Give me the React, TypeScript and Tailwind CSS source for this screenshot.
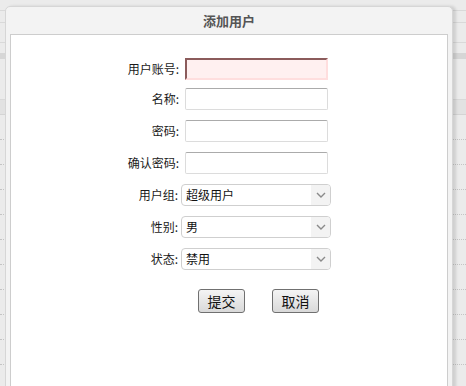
import { useState } from "react";

const font = { fontFamily: '"Noto Sans CJK SC", "Liberation Sans", sans-serif' };

function Chevron() {
	return (
		<svg width="10" height="6" viewBox="0 0 10 6" fill="none">
			<path d="M1 1l4 4 4-4" stroke="#8a8a8a" strokeWidth="1.4" />
		</svg>
	);
}

function Select({ value, options }: { value: string; options: string[] }) {
	const [v, setV] = useState(value);
	return (
		<div className="relative w-[150px] h-[22px]">
			<select value={v} onChange={(e) => setV(e.target.value)} className="appearance-none w-full h-full rounded-[4px] border border-[#cfcfcf] bg-white pl-[4px] text-[12px] text-[#111] outline-none">
				{options.map((o) => (
					<option key={o}>{o}</option>
				))}
			</select>
			<div className="pointer-events-none absolute right-[1px] top-[1px] bottom-[1px] w-[19px] rounded-r-[3px] bg-[#f3f3f3] flex items-center justify-center">
				<Chevron />
			</div>
		</div>
	);
}

export default function App() {
	const [form, setForm] = useState({ account: "", name: "", pwd: "", pwd2: "" });
	const rows = Array.from({ length: 10 });

	return (
		<div className="relative w-[466px] h-[386px] overflow-hidden bg-[#ebebeb]" style={font}>
			{/* underlying page */}
			<div className="flex flex-col">
				<div className="h-[11px] border-b border-[#d9d9d9]" />
				<div className="h-[12px] border-b border-[#d9d9d9]" />
				<div className="h-[20px] border-b border-[#d9d9d9]" />
				<div className="h-[10px]" />
				<div className="h-[6px] bg-[#d6d6d6]" />
				<div className="h-[41px] border-b border-[#d9d9d9]" />
				<div className="h-[15px] bg-[#e2e2e2] border-b border-[#d4d4d4]" />
				{rows.map((_, i) => (
					<div key={i} className="h-[25px] border-b border-dotted border-[#c4c4c4]" />
				))}
			</div>

			{/* dialog */}
			<div className="absolute left-[5px] top-[6px] w-[448px] h-[400px] rounded-t-[5px] border border-[#d6d6d6] bg-[#f3f3f3] shadow-[3px_0_3px_rgba(0,0,0,0.12)] flex flex-col">
				<div className="h-[27px] flex items-center justify-center text-[13px] font-bold text-[#555]">添加用户</div>
				<div className="mx-[4px] flex-1 border border-[#cdcdcd] bg-white pt-[23px]">
					<div className="flex flex-col text-[12px] text-[#1a1a1a]">
						<div className="flex items-center h-[22px]">
							<span className="w-[169px] text-right pr-[1px]">用户账号:</span>
							<input value={form.account} onChange={(e) => setForm({ ...form, account: e.target.value })} className="ml-[5px] w-[143px] h-[22px] border-2 border-t-[#8b5b5b] border-l-[#8b5b5b] border-r-[#ffdede] border-b-[#ffdede] bg-[#fff0f0] outline-none" />
						</div>
						<div className="flex items-center h-[22px] mt-[8px]">
							<span className="w-[169px] text-right pr-[1px]">名称:</span>
							<input value={form.name} onChange={(e) => setForm({ ...form, name: e.target.value })} className="ml-[5px] w-[143px] h-[22px] rounded-[2px] border border-[#dcdcdc] border-t-[#ababab] bg-white outline-none" />
						</div>
						<div className="flex items-center h-[22px] mt-[10px]">
							<span className="w-[169px] text-right pr-[1px]">密码:</span>
							<input type="password" value={form.pwd} onChange={(e) => setForm({ ...form, pwd: e.target.value })} className="ml-[5px] w-[143px] h-[22px] rounded-[2px] border border-[#dcdcdc] border-t-[#ababab] bg-white outline-none" />
						</div>
						<div className="flex items-center h-[22px] mt-[10px]">
							<span className="w-[169px] text-right pr-[1px]">确认密码:</span>
							<input type="password" value={form.pwd2} onChange={(e) => setForm({ ...form, pwd2: e.target.value })} className="ml-[5px] w-[143px] h-[22px] rounded-[2px] border border-[#dcdcdc] border-t-[#ababab] bg-white outline-none" />
						</div>
						<div className="flex items-center h-[22px] mt-[10px]">
							<span className="w-[167px] text-right">用户组:</span>
							<div className="ml-[3px]"><Select value="超级用户" options={["超级用户", "普通用户"]} /></div>
						</div>
						<div className="flex items-center h-[22px] mt-[10px]">
							<span className="w-[167px] text-right">性别:</span>
							<div className="ml-[3px]"><Select value="男" options={["男", "女"]} /></div>
						</div>
						<div className="flex items-center h-[22px] mt-[10px]">
							<span className="w-[167px] text-right">状态:</span>
							<div className="ml-[3px]"><Select value="禁用" options={["禁用", "启用"]} /></div>
						</div>
						<div className="flex mt-[19px] pl-[187px] gap-[27px]">
							<button className="w-[47px] h-[24px] rounded-[3px] border border-[#707070] bg-gradient-to-b from-[#f4f4f4] to-[#d9d9d9] text-[14px] text-[#111]">提交</button>
							<button className="w-[47px] h-[24px] rounded-[3px] border border-[#707070] bg-gradient-to-b from-[#f4f4f4] to-[#d9d9d9] text-[14px] text-[#111]">取消</button>
						</div>
					</div>
				</div>
			</div>
		</div>
	);
}
